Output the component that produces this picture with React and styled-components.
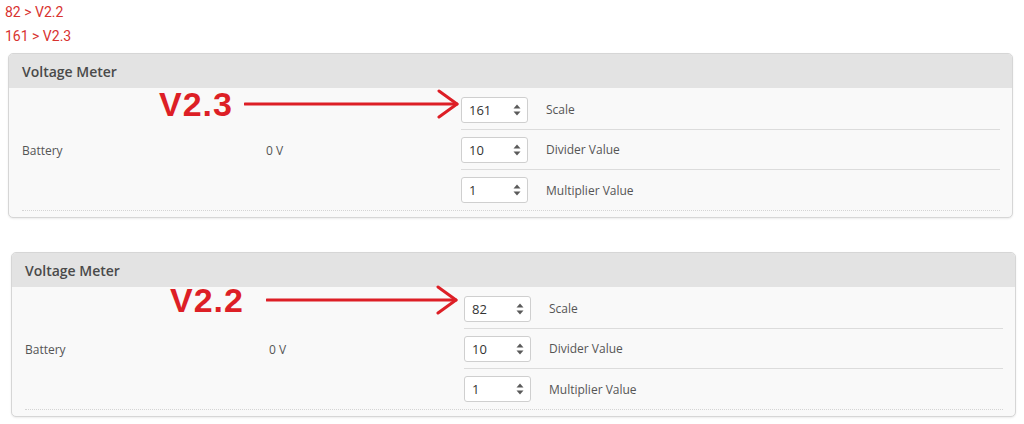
import React from 'react';
import styled, { createGlobalStyle } from 'styled-components';

const GlobalStyle = createGlobalStyle`
  body {
    margin: 0;
    background: #fff;
    font-family: "Open Sans", "Noto Sans", sans-serif;
  }
`;

const Page = styled.div`
  width: 1024px;
  height: 424px;
  overflow: hidden;
`;

const Notes = styled.div`
  padding: 0 0 0 5px;
  margin-bottom: 5px;
  font-family: Roboto, "Liberation Sans", sans-serif;
  font-size: 14px;
  line-height: 24px;
  color: #d8322f;
`;

const Panel = styled.section`
  position: relative;
  box-sizing: border-box;
  width: 1005px;
  height: 165px;
  margin: 0 0 34px ${p => p.$left}px;
  border: 1px solid #d6d6d6;
  border-radius: 5px;
  background: #f9f9f9;
  box-shadow: 0 1px 2px rgba(0, 0, 0, 0.08);
  overflow: hidden;
`;

const Header = styled.div`
  height: 34px;
  background: #e3e3e3;
  padding: 0 13px;
  display: flex;
  align-items: center;
  font-size: 14px;
  font-weight: 600;
  color: #4a4a4a;
`;

const Body = styled.div`
  display: flex;
  margin: 0 12px 0 13px;
  padding-top: 2px;
  border-bottom: 1px dotted #d4d4d4;
`;

const Cell = styled.div`
  width: ${p => p.$width}px;
  display: flex;
  align-items: center;
  font-size: 12px;
  color: #555;
`;

const Fields = styled.div`
  flex: 1;
  display: flex;
  flex-direction: column;
`;

const FieldRow = styled.div`
  height: 40px;
  display: flex;
  align-items: center;
  gap: 18px;
  border-bottom: ${p => (p.$last ? 'none' : '1px solid #dcdcdc')};
  box-sizing: border-box;
  font-size: 12px;
  color: #555;
`;

const NumberBox = styled.div`
  box-sizing: border-box;
  width: 67px;
  height: 26px;
  background: #fff;
  border: 1px solid #cfcfcf;
  border-radius: 3px;
  display: flex;
  align-items: center;
  justify-content: space-between;
  padding: 0 5px 0 7px;
  font-size: 13px;
  color: #333;
`;

const Annotation = styled.div`
  position: absolute;
  left: ${p => p.$x}px;
  top: ${p => p.$y}px;
  display: flex;
  align-items: center;
  gap: ${p => p.$gap}px;
  color: #dd1f26;
`;

const AnnoLabel = styled.span`
  font-family: "Liberation Sans", Arial, sans-serif;
  font-weight: 700;
  font-size: 34px;
  letter-spacing: 1px;
  line-height: 34px;
`;

function Spinner() {
  return (
    <svg width="10" height="16" viewBox="0 0 10 16">
      <path d="M1.5 6.5 L5 2.5 L8.5 6.5 Z" fill="#5a5a5a" />
      <path d="M1.5 9.5 L5 13.5 L8.5 9.5 Z" fill="#5a5a5a" />
    </svg>
  );
}

function Arrow({ length }) {
  return (
    <svg width={length} height="34" viewBox={`0 0 ${length} 34`}>
      <g stroke="#dd1f26" strokeWidth="3" fill="none" strokeLinecap="round" strokeLinejoin="round">
        <path d={`M1 17 L${length - 2} 17`} />
        <path d={`M${length - 20} 4 L${length - 2} 17 L${length - 20} 30`} />
      </g>
    </svg>
  );
}

function NumberField({ value, label, last }) {
  return (
    <FieldRow $last={last}>
      <NumberBox>
        <span>{value}</span>
        <Spinner />
      </NumberBox>
      <span>{label}</span>
    </FieldRow>
  );
}

function VoltagePanel({ left, scale, note }) {
  return (
    <Panel $left={left}>
      <Header>Voltage Meter</Header>
      <Body>
        <Cell $width={244}>Battery</Cell>
        <Cell $width={195}>0 V</Cell>
        <Fields>
          <NumberField value={scale} label="Scale" />
          <NumberField value="10" label="Divider Value" />
          <NumberField value="1" label="Multiplier Value" last />
        </Fields>
      </Body>
      <Annotation $x={note.x} $y={note.y} $gap={note.gap}>
        <AnnoLabel>{note.text}</AnnoLabel>
        <Arrow length={note.length} />
      </Annotation>
    </Panel>
  );
}

export default function App() {
  return (
    <Page>
      <GlobalStyle />
      <Notes>
        <div>82 &gt; V2.2</div>
        <div>161 &gt; V2.3</div>
      </Notes>
      <VoltagePanel
        left={8}
        scale="161"
        note={{ text: 'V2.3', x: 150, y: 33, gap: 11, length: 215 }}
      />
      <VoltagePanel
        left={11}
        scale="82"
        note={{ text: 'V2.2', x: 158, y: 30, gap: 22, length: 192 }}
      />
    </Page>
  );
}
